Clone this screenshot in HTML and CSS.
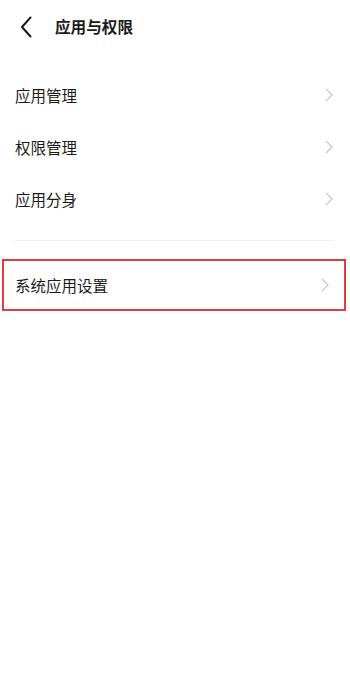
FILE: index.html
```html
<!DOCTYPE html>
<html lang="zh-CN">
<head>
<meta charset="utf-8">
<link rel="stylesheet" href="styles.css">
</head>
<body>
<div class="page">
  <header class="topbar">
    <svg class="back" width="12" height="22" viewBox="0 0 12 22"><path d="M10.5 1.5 L2 11 L10.5 20.5" fill="none" stroke="#1a1a1a" stroke-width="2" stroke-linecap="round" stroke-linejoin="round"/></svg>
    <h1 class="title">应用与权限</h1>
  </header>
  <ul class="list first">
    <li class="row"><span class="label">应用管理</span><svg class="chev" width="8" height="14" viewBox="0 0 8 14"><path d="M1 1 L7 7 L1 13" fill="none" stroke="#c8c8c8" stroke-width="1.3"/></svg></li>
    <li class="row"><span class="label">权限管理</span><svg class="chev" width="8" height="14" viewBox="0 0 8 14"><path d="M1 1 L7 7 L1 13" fill="none" stroke="#c8c8c8" stroke-width="1.3"/></svg></li>
    <li class="row"><span class="label">应用分身</span><svg class="chev" width="8" height="14" viewBox="0 0 8 14"><path d="M1 1 L7 7 L1 13" fill="none" stroke="#c8c8c8" stroke-width="1.3"/></svg></li>
  </ul>
  <div class="divider"></div>
  <ul class="list">
    <li class="row marked"><span class="label">系统应用设置</span><svg class="chev" width="8" height="14" viewBox="0 0 8 14"><path d="M1 1 L7 7 L1 13" fill="none" stroke="#c8c8c8" stroke-width="1.3"/></svg></li>
  </ul>
</div>
</body>
</html>
```

FILE: styles.css
```css
html, body {
  margin: 0;
  padding: 0;
  background: #ffffff;
}
body {
  font-family: "Noto Sans CJK SC", "Noto Sans", sans-serif;
  color: #1a1a1a;
}
.page {
  width: 350px;
  min-height: 692px;
}
.topbar {
  height: 54px;
  display: flex;
  align-items: center;
  padding-left: 20px;
}
.back {
  display: block;
}
.title {
  margin: 0 0 0 23px;
  font-size: 15.6px;
  font-weight: 700;
  color: #1c1c1c;
  line-height: 1;
}
.list {
  list-style: none;
  margin: 0;
  padding: 0;
}
.list.first {
  padding-top: 15px;
}
.row {
  height: 52px;
  display: flex;
  align-items: center;
  justify-content: space-between;
  padding: 0 17px 0 15px;
  box-sizing: border-box;
}
.label {
  font-size: 15.5px;
  color: #1a1a1a;
}
.chev {
  display: block;
}
.divider {
  height: 1px;
  background: #f0f0f0;
  margin: 15px 15px 18px 14px;
}
.row.marked {
  width: 344px;
  margin-left: 2px;
  border: 2px solid #e23a3f;
  padding: 0 15px 0 11px;
}
```
